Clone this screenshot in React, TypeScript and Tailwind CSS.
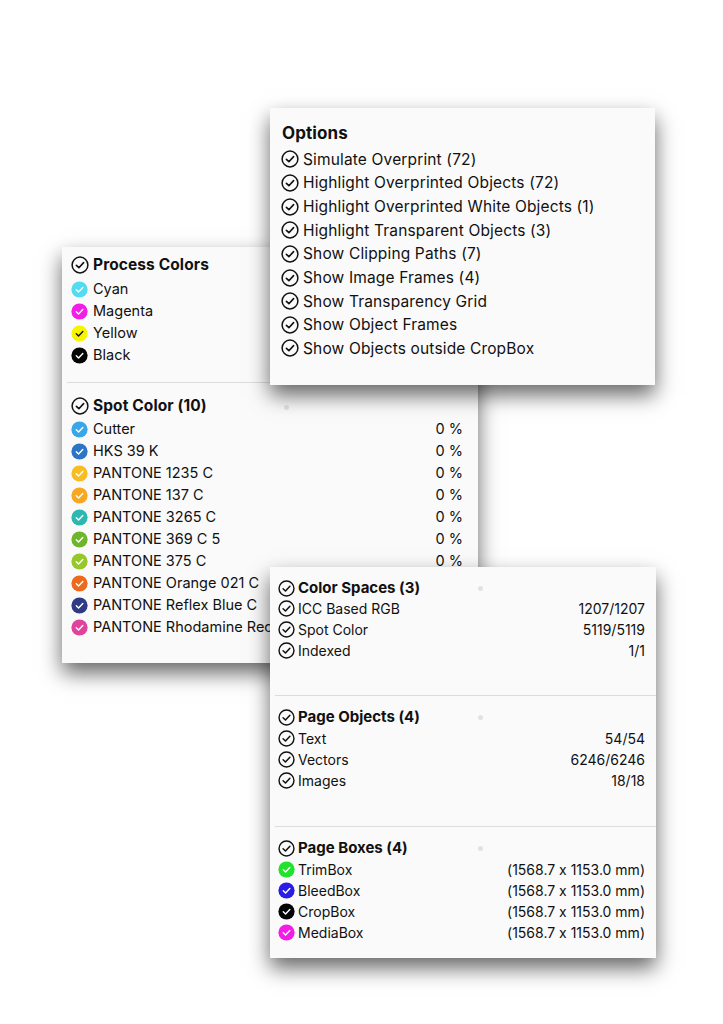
import React from "react";

const FONT = { fontFamily: "Inter, 'Noto Sans', sans-serif", fontFeatureSettings: "'calt' 0" };

function OutlineCheck({ size = 18 }: { size?: number }) {
  return (
    <svg width={size} height={size} viewBox="0 0 18 18" className="shrink-0">
      <circle cx="9" cy="9" r="7.9" fill="none" stroke="#111" strokeWidth="1.5" />
      <path d="M5.4 9.3 L7.9 11.7 L12.6 6.6" fill="none" stroke="#111" strokeWidth="1.6" strokeLinecap="round" strokeLinejoin="round" />
    </svg>
  );
}

function FilledCheck({ color, check = "#fff", size = 17 }: { color: string; check?: string; size?: number }) {
  return (
    <svg width={size} height={size} viewBox="0 0 18 18" className="shrink-0">
      <circle cx="9" cy="9" r="8.6" fill={color} />
      <path d="M5.6 9.3 L8 11.6 L12.5 6.8" fill="none" stroke={check} strokeWidth="1.5" strokeLinecap="round" strokeLinejoin="round" />
    </svg>
  );
}

const options = [
  "Simulate Overprint (72)",
  "Highlight Overprinted Objects (72)",
  "Highlight Overprinted White Objects (1)",
  "Highlight Transparent Objects (3)",
  "Show Clipping Paths (7)",
  "Show Image Frames (4)",
  "Show Transparency Grid",
  "Show Object Frames",
  "Show Objects outside CropBox",
];

const processColors: [string, string, string?][] = [
  ["Cyan", "#52dcf2"],
  ["Magenta", "#f21ee8"],
  ["Yellow", "#f7f400", "#111"],
  ["Black", "#050505"],
];

const spotColors: [string, string][] = [
  ["Cutter", "#3aa6e8"],
  ["HKS 39 K", "#2b74c6"],
  ["PANTONE 1235 C", "#f8bd22"],
  ["PANTONE 137 C", "#f6a823"],
  ["PANTONE 3265 C", "#2cb8b0"],
  ["PANTONE 369 C 5", "#6db52b"],
  ["PANTONE 375 C", "#95c828"],
  ["PANTONE Orange 021 C", "#ec6a1e"],
  ["PANTONE Reflex Blue C", "#2f3a84"],
  ["PANTONE Rhodamine Red C", "#e0429c"],
];

const shadow = "shadow-[0_10px_20px_rgba(0,0,0,0.6)]";

function LeftPanel() {
  return (
    <div className={`absolute left-[62px] top-[247px] w-[416px] h-[416px] bg-[#fafafa] ${shadow} text-[#111] text-[14.5px] overflow-hidden`}>
      <div className="pt-[7px] pl-[9px] pr-[15px]">
        <div className="flex items-center gap-[4px] h-[22px] font-bold text-[15.5px] tracking-[0.1px]">
          <OutlineCheck />
          <span>Process Colors</span>
        </div>
        <div className="mt-[2px]">
          {processColors.map(([n, c, k]) => (
            <div key={n} className="flex items-center gap-[5px] h-[22px]">
              <FilledCheck color={c} check={k ?? "#fff"} />
              <span>{n}</span>
            </div>
          ))}
        </div>
      </div>
      <div className="mt-[16px] ml-[5px] h-px bg-[#dcdcdc]" />
      <div className="relative pt-[12px] pl-[9px] pr-[15px]">
        <div className="absolute left-[222px] top-[22px] w-[5px] h-[5px] rounded-full bg-[#e2e2e2]" />
        <div className="flex items-center gap-[4px] h-[22px] font-bold text-[15.5px] tracking-[0.1px]">
          <OutlineCheck />
          <span>Spot Color (10)</span>
        </div>
        <div className="mt-px">
          {spotColors.map(([n, c]) => (
            <div key={n} className="flex items-center gap-[5px] h-[22px]">
              <FilledCheck color={c} />
              <span className="flex-1 whitespace-nowrap">{n}</span>
              <span>0 %</span>
            </div>
          ))}
        </div>
      </div>
    </div>
  );
}

function OptionsPanel() {
  return (
    <div className={`absolute left-[270px] top-[108px] w-[385px] h-[277px] bg-[#fafafa] ${shadow} text-[#111] text-[15.5px] tracking-[0.15px] pl-[11px] pt-[13px]`}>
      <div className="h-[24px] leading-[24px] font-bold text-[17px] tracking-[0.1px] pl-px">Options</div>
      <div className="mt-[2.5px]">
        {options.map((o) => (
          <div key={o} className="flex items-center gap-[4px] h-[23.65px]">
            <OutlineCheck />
            <span className="whitespace-nowrap">{o}</span>
          </div>
        ))}
      </div>
    </div>
  );
}

type Row = { icon?: string; label: string; value: string };

function Section({ title, rows, bottom, gapTop }: { title: string; rows: Row[]; bottom: number; gapTop: number }) {
  return (
    <div className="relative px-[8px] pr-[11px]" style={{ paddingBottom: bottom }}>
      <div className="absolute left-[208px] top-[9px] w-[5px] h-[5px] rounded-full bg-[#e2e2e2]" />
      <div className="flex items-center gap-[3px] h-[22px] font-bold text-[15px]">
        <OutlineCheck size={17} />
        <span>{title}</span>
      </div>
      <div style={{ marginTop: gapTop }}>
        {rows.map((r) => (
          <div key={r.label} className="flex items-center gap-[3px] h-[21px]">
            {r.icon ? <FilledCheck color={r.icon} /> : <OutlineCheck size={17} />}
            <span className="flex-1">{r.label}</span>
            <span>{r.value}</span>
          </div>
        ))}
      </div>
    </div>
  );
}

function InfoPanel() {
  return (
    <div className={`absolute left-[270px] top-[567px] w-[386px] h-[391px] bg-[#fafafa] ${shadow} text-[#111] text-[14px] pt-[10px]`}>
      <Section
        title="Color Spaces (3)"
        bottom={34}
        gapTop={-1}
        rows={[
          { label: "ICC Based RGB", value: "1207/1207" },
          { label: "Spot Color", value: "5119/5119" },
          { label: "Indexed", value: "1/1" },
        ]}
      />
      <div className="h-px bg-[#dcdcdc] ml-[5px]" />
      <div className="pt-[10px]">
        <Section
          title="Page Objects (4)"
          bottom={35}
          gapTop={0}
          rows={[
            { label: "Text", value: "54/54" },
            { label: "Vectors", value: "6246/6246" },
            { label: "Images", value: "18/18" },
          ]}
        />
      </div>
      <div className="h-px bg-[#dcdcdc] ml-[5px]" />
      <div className="pt-[10px]">
        <Section
          title="Page Boxes (4)"
          bottom={0}
          gapTop={0}
          rows={[
            { icon: "#22e22c", label: "TrimBox", value: "(1568.7 x 1153.0 mm)" },
            { icon: "#2b1be6", label: "BleedBox", value: "(1568.7 x 1153.0 mm)" },
            { icon: "#050505", label: "CropBox", value: "(1568.7 x 1153.0 mm)" },
            { icon: "#f21ee8", label: "MediaBox", value: "(1568.7 x 1153.0 mm)" },
          ]}
        />
      </div>
    </div>
  );
}

export default function App() {
  return (
    <div className="relative w-[723px] h-[1024px] bg-white overflow-hidden" style={FONT}>
      <LeftPanel />
      <OptionsPanel />
      <InfoPanel />
    </div>
  );
}
